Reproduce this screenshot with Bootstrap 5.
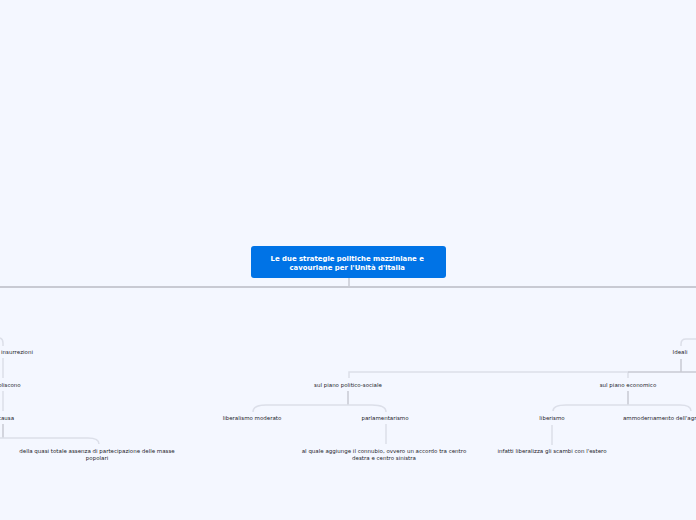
<!DOCTYPE html>
<html lang="it"><head><meta charset="utf-8"><title>Mappa</title>
<link href="https://cdn.jsdelivr.net/npm/bootstrap@5.3.0/dist/css/bootstrap.min.css" rel="stylesheet">
<style>
html,body{margin:0;height:100%;background:#f4f7ff;overflow:hidden}
.canvas-map{position:relative;width:696px;height:520px;overflow:hidden;font-family:"DejaVu Sans",sans-serif}
.links{position:absolute;left:0;top:0}
.links path{fill:none;stroke:#dcdfe9;stroke-width:1.5}
.links .strong{stroke:#c8cad3}
.links .axis{stroke:#c8cad3;stroke-width:2}
.root-node{position:absolute;left:251px;top:246px;width:195px;height:32px;padding-top:1px;padding-right:2px;background:#0073e6;color:#fff;border-radius:3px}
.root-text{flex:none;white-space:nowrap;font-weight:700;font-size:13.8px;line-height:19px;text-align:center;transform:scale(.5)}
.leaf{position:absolute;font-size:11px;line-height:14px;color:#23232a;text-align:center;white-space:nowrap;transform-origin:0 0;transform:scale(.5) translateX(-50%)}
.leaf.from-left{transform:scale(.5)}
</style></head><body>
<div class="canvas-map">
<svg class="links" width="696" height="520">
<path class="axis" d="M0 287H696"/>
<path class="strong" d="M349 278V287"/>
<path d="M0 338Q3 339 3 343V346M3 358V378M3 391V411"/>
<path class="strong" d="M3 424V438"/>
<path d="M0 438H88Q99 438 99 444"/>
<path d="M349 378V372H628"/>
<path class="strong" d="M348 391V405"/>
<path d="M253 412Q253 405 266 405H372Q386 405 386 412M386 424V444"/>
<path d="M628 378V372"/>
<path class="strong" d="M628 372H696M628 391V405M681 359V372"/>
<path d="M553 411Q553 405 566 405H680Q691 405 691 411M552 425V445M681 346V344Q681 339 686 339H696"/>
</svg>
<div class="root-node d-flex align-items-center justify-content-center"><div class="root-text">Le due strategie politiche mazziniane e<br>cavouriane per l'Unità d'Italia</div></div>
<div class="leaf" style="left:17px;top:349px">insurrezioni</div>
<div class="leaf" style="left:5.5px;top:382px">aboliscono</div>
<div class="leaf" style="left:5.5px;top:415px">causa</div>
<div class="leaf" style="left:97px;top:448px">della quasi totale assenza di partecipazione delle masse<br>popolari</div>
<div class="leaf" style="left:347.5px;top:382px">sul piano politico-sociale</div>
<div class="leaf" style="left:251.5px;top:415px">liberalismo moderato</div>
<div class="leaf" style="left:385px;top:415px">parlamentarismo</div>
<div class="leaf" style="left:384px;top:448px">al quale aggiunge il connubio, ovvero un accordo tra centro<br>destra e centro sinistra</div>
<div class="leaf" style="left:680px;top:349px">Ideali</div>
<div class="leaf" style="left:627.5px;top:382px">sul piano economico</div>
<div class="leaf" style="left:552px;top:415px">liberismo</div>
<div class="leaf from-left" style="left:623px;top:415px">ammodernamento dell'agricoltura</div>
<div class="leaf" style="left:551.5px;top:448px">infatti liberalizza gli scambi con l'estero</div>
</div>
<script src="https://cdn.jsdelivr.net/npm/bootstrap@5.3.0/dist/js/bootstrap.bundle.min.js"></script>
</body></html>
